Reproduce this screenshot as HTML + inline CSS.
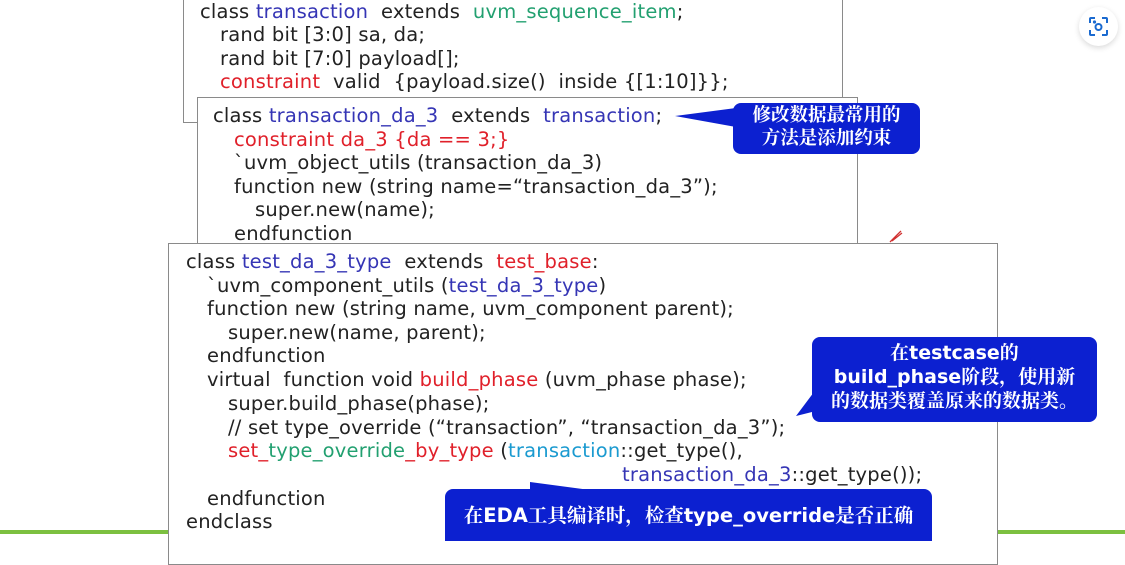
<!DOCTYPE html>
<html><head><meta charset="utf-8"><style>
body{margin:0;width:1125px;height:534px;overflow:hidden;background:#fff;position:relative;font-family:"DejaVu Sans","Noto Sans CJK SC",sans-serif;}
.box{position:absolute;background:#fff;border:1.5px solid #8a8a8a;}
.l{position:absolute;font-size:19.5px;color:#222;white-space:pre;line-height:22px;letter-spacing:0.2px}
.b{color:#3535b5}.g{color:#22a070}.r{color:#e0202a}.c{color:#1a9ad0}
.call{position:absolute;background:#0c20d0;color:#fff;font-weight:bold;font-size:18.5px;text-align:center;border-radius:8px;line-height:23px;font-family:"DejaVu Sans","Noto Serif CJK SC",sans-serif;}
</style></head><body>
<div style="position:absolute;left:0;top:530px;width:1125px;height:4px;background:#7cc040"></div>
<div class="box" style="left:183px;top:-2px;width:658px;height:123px"></div>
<div class="l" style="left:200px;top:1px">class <span class="b">transaction</span>  extends  <span class="g">uvm_sequence_item</span>;</div>
<div class="l" style="left:220px;top:24px">rand bit [3:0] sa, da;</div>
<div class="l" style="left:220px;top:48px">rand bit [7:0] payload[];</div>
<div class="l" style="left:220px;top:71px"><span class="r">constraint</span>  valid  {payload.size()  inside {[1:10]}};</div>

<div class="box" style="left:197px;top:97px;width:659px;height:160px"></div>
<div class="l" style="left:213px;top:105px">class <span class="b">transaction_da_3</span>  extends  <span class="b">transaction</span>;</div>
<div class="l r" style="left:234px;top:129px">constraint da_3 {da == 3;}</div>
<div class="l" style="left:234px;top:152px">`uvm_object_utils (transaction_da_3)</div>
<div class="l" style="left:234px;top:176px">function new (string name=“transaction_da_3”);</div>
<div class="l" style="left:255px;top:199px">super.new(name);</div>
<div class="l" style="left:234px;top:223px">endfunction</div>

<div class="call" style="left:733px;top:103px;width:187px;height:50px;padding-top:1px">修改数据最常用的<br>方法是添加约束</div>
<svg style="position:absolute;left:670px;top:105px" width="70" height="25"><polygon points="5,11 66,3 66,22" fill="#0c20d0"/></svg>
<svg style="position:absolute;left:888px;top:228px" width="16" height="16"><path d="M2,14 L13,3 M4,13 L14,5" stroke="#d03030" stroke-width="1.3" fill="none"/></svg>

<div class="box" style="left:168px;top:243px;width:828px;height:320px"></div>
<div class="l" style="left:186px;top:251px">class <span class="b">test_da_3_type</span>  extends  <span class="r">test_base</span>:</div>
<div class="l" style="left:207px;top:275px">`uvm_component_utils (<span class="b">test_da_3_type</span>)</div>
<div class="l" style="left:207px;top:298px">function new (string name, uvm_component parent);</div>
<div class="l" style="left:228px;top:322px">super.new(name, parent);</div>
<div class="l" style="left:207px;top:345px">endfunction</div>
<div class="l" style="left:207px;top:369px">virtual  function void <span class="r">build_phase</span> (uvm_phase phase);</div>
<div class="l" style="left:228px;top:393px">super.build_phase(phase);</div>
<div class="l" style="left:228px;top:417px">// set type_override (“transaction”, “transaction_da_3”);</div>
<div class="l" style="left:228px;top:440px"><span class="r">set_</span><span class="g">type_override</span><span class="r">_by_type</span> (<span class="c">transaction</span>::get_type(),</div>
<div class="l" style="left:622px;top:464px"><span class="b">transaction_da_3</span>::get_type());</div>
<div class="l" style="left:207px;top:488px">endfunction</div>
<div class="l" style="left:186px;top:511px">endclass</div>

<div class="call" style="left:812px;top:337px;width:285px;height:81px;padding-top:4px;line-height:24px;font-size:19px">在testcase的<br>build_phase阶段，使用新<br>的数据类覆盖原来的数据类。</div>
<svg style="position:absolute;left:792px;top:390px" width="30" height="30"><polygon points="4,26 22,2 28,20" fill="#0c20d0"/></svg>
<svg style="position:absolute;left:520px;top:480px" width="80" height="12"><polygon points="10,2 70,10 10,10" fill="#0c20d0"/></svg>
<div class="call" style="left:445px;top:489px;width:487px;height:52px;line-height:54px;font-size:19.5px;border-radius:8px 8px 0 0">在EDA工具编译时，检查type_override是否正确</div>

<div style="position:absolute;left:1079px;top:7px;width:39px;height:39px;border-radius:50%;background:#fff;box-shadow:0 2px 6px rgba(0,0,0,.15)"></div>
<svg style="position:absolute;left:1088px;top:16px" width="21" height="21" viewBox="0 0 21 21" fill="none" stroke="#1a6ad0" stroke-width="2"><path d="M2,7V3Q2,2 3,2H7M14,2H18Q19,2 19,3V7M19,14V18Q19,19 18,19H14M7,19H3Q2,19 2,18V14"/><circle cx="10.5" cy="11" r="3"/><circle cx="6.5" cy="6" r="0.6" fill="#1a6ad0"/></svg>
</body></html>
